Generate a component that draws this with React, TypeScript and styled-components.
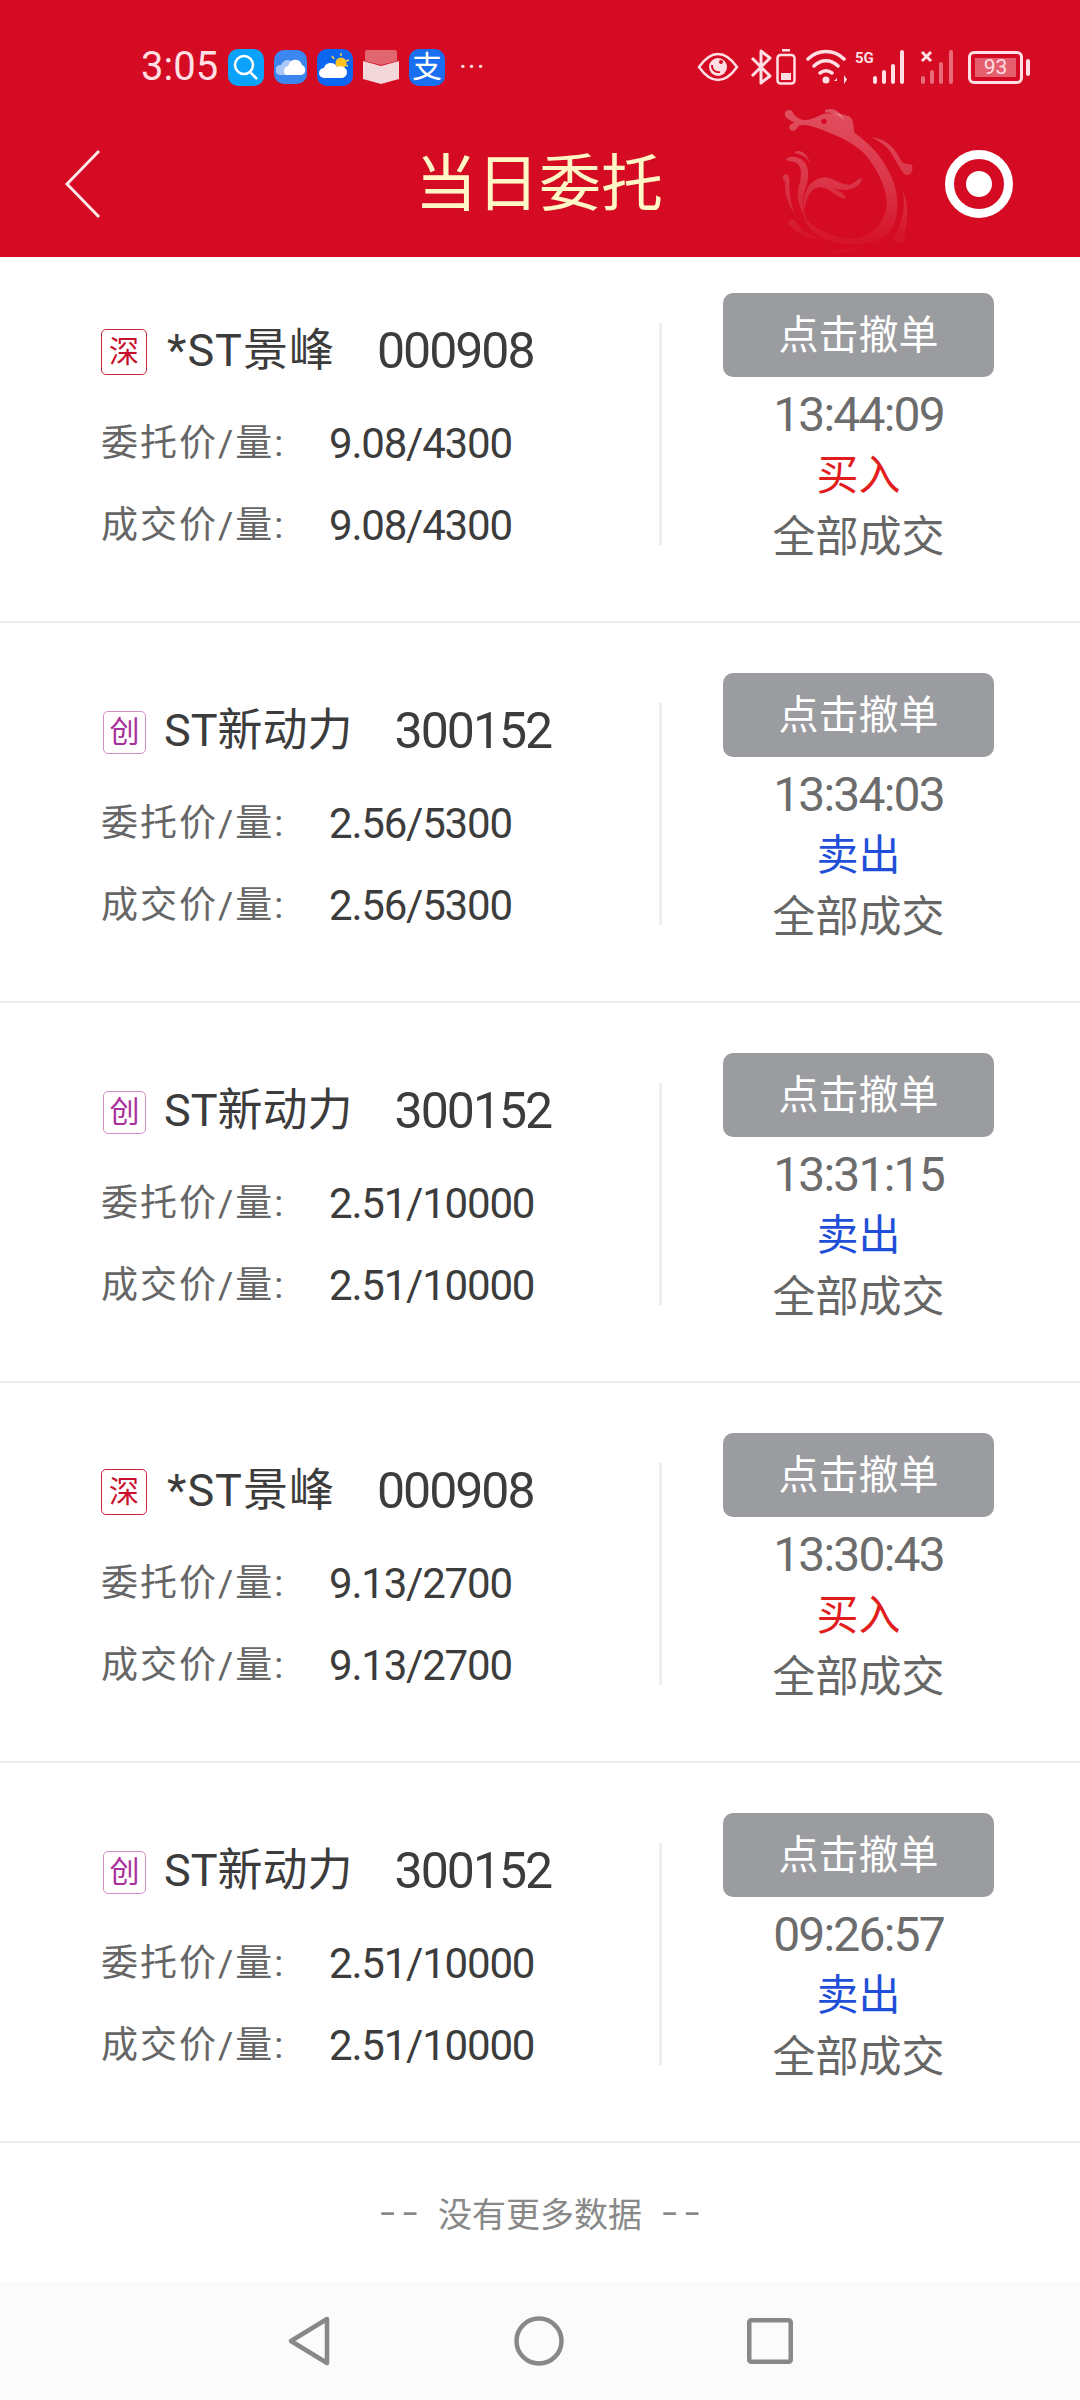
import React from "react";
import styled, {createGlobalStyle} from "styled-components";

const FONT = `Roboto, "Noto Sans CJK SC", sans-serif`;
const STATUS = "#ffdfe3";

interface Order {
  market: "深" | "创";
  name: string;
  code: string;
  price: string;
  filled: string;
  time: string;
  side: "买入" | "卖出";
}

const orders: Order[] = [
  {market: "深", name: "*ST景峰", code: "000908", price: "9.08/4300", filled: "9.08/4300", time: "13:44:09", side: "买入"},
  {market: "创", name: "ST新动力", code: "300152", price: "2.56/5300", filled: "2.56/5300", time: "13:34:03", side: "卖出"},
  {market: "创", name: "ST新动力", code: "300152", price: "2.51/10000", filled: "2.51/10000", time: "13:31:15", side: "卖出"},
  {market: "深", name: "*ST景峰", code: "000908", price: "9.13/2700", filled: "9.13/2700", time: "13:30:43", side: "买入"},
  {market: "创", name: "ST新动力", code: "300152", price: "2.51/10000", filled: "2.51/10000", time: "09:26:57", side: "卖出"},
];

const DragonMark = () => (
  <DragonSvg viewBox="0 0 480 480" width={160} height={160}>
    <defs>
      <linearGradient id="dragonFade" gradientUnits="userSpaceOnUse" x1="0" y1="30" x2="0" y2="465">
        <stop offset="0" stopColor="#fff" stopOpacity="0.28" />
        <stop offset="0.5" stopColor="#fff" stopOpacity="0.17" />
        <stop offset="0.85" stopColor="#fff" stopOpacity="0.05" />
        <stop offset="1" stopColor="#fff" stopOpacity="0.02" />
      </linearGradient>
    </defs>
    <g fill="url(#dragonFade)">
      {/* head, neck and the body ring */}
      <path d="M44 42C46 30 60 26 68 36 72 46 82 56 100 60 122 62 140 50 160 42 190 36 222 42 240 50 252 62 250 84 254 100 296 128 346 176 372 250 390 310 386 370 350 405 310 436 240 440 180 424 140 410 112 386 100 350 120 374 170 408 240 418 296 414 338 380 350 320 352 268 326 210 282 160 250 126 190 100 130 80 110 74 96 74 84 78 78 96 62 98 58 84 56 74 66 70 74 68 66 62 46 58 44 42Z" />
      <path d="M165 30C190 20 212 34 224 62 208 44 190 36 165 38Z" />
      <path d="M305 112C350 118 376 146 392 180 400 196 414 188 426 196 432 212 420 230 406 224 388 212 376 170 352 144 340 132 322 120 305 112Z" />
      <path d="M48 178C54 166 84 168 100 182 118 200 120 236 104 270 96 300 100 340 114 366 94 340 78 300 84 268 92 240 100 210 84 192 72 182 58 188 48 178Z" />
      <path d="M75 155C92 146 116 164 122 196 118 180 100 162 75 160Z" />
      <path d="M104 330C94 280 118 236 166 232 196 236 214 256 240 254 256 250 264 234 275 236 276 252 252 270 222 270 210 270 198 268 186 264 204 272 222 280 228 292 222 300 208 292 194 282 170 262 146 254 128 270 112 286 108 306 104 330Z" />
      <path d="M38 232C42 216 58 222 58 240 58 270 60 310 76 346 56 320 42 280 46 250 46 240 38 240 38 232Z" />
      <path d="M398 270C414 310 416 350 406 392 402 412 406 426 390 430 374 430 368 414 380 396 396 370 408 320 398 270Z" />
      <path d="M54 368C62 352 76 358 88 378 104 398 128 408 150 418 116 416 84 402 68 384 62 378 54 378 54 368Z" />
      <path d="M175 452C210 450 250 446 282 434 260 452 214 464 180 462Z" />
    </g>
    <circle cx="162" cy="64" r="8" fill="#d40b22" />
  </DragonSvg>
);

const StatusIcons = () => (
  <RightIcons>
    <svg width="42" height="30" viewBox="0 0 42 30">
      <path d="M2 15C9 5 15 2 21 2s12 3 19 13c-7 10-13 13-19 13S9 25 2 15z" fill="none" stroke={STATUS} strokeWidth="2.500" />
      <circle cx="21" cy="15" r="9" fill={STATUS} />
      <path d="M15 13a6.500 6.500 0 0 0 8 7" fill="none" stroke="#d40b22" strokeWidth="1.800" />
      <circle cx="24" cy="10" r="2" fill="#d40b22" />
    </svg>
    <BluetoothSvg width="22" height="36" viewBox="0 0 22 36">
      <path d="M2 9l18 18-9 7V2l9 7L2 27" fill="none" stroke={STATUS} strokeWidth="3" strokeLinejoin="round" />
    </BluetoothSvg>
    <PhoneBatterySvg width="20" height="36" viewBox="0 0 20 36">
      <rect x="6" y="0" width="8" height="2.500" fill={STATUS} />
      <rect x="1.500" y="6" width="17" height="28.500" rx="3" fill="none" stroke={STATUS} strokeWidth="2.500" />
      <rect x="5" y="24" width="10" height="7" fill={STATUS} />
    </PhoneBatterySvg>
    <WifiSvg width="42" height="36" viewBox="0 0 42 36">
      <path d="M2 10C12 0 28 0 38 10M8 17c7-7 17-7 24 0M14 24c4-3 8-3 12 0" fill="none" stroke={STATUS} strokeWidth="3.500" strokeLinecap="round" />
      <circle cx="20" cy="31" r="3.500" fill={STATUS} />
      <path d="M31 29l-3 3h3zM35 26v9M38 26v9l3-4.500z" fill={STATUS} />
    </WifiSvg>
    <SignalGroup>
      <FiveG>5G</FiveG>
      <svg width="36" height="34" viewBox="0 0 36 34">
        <path d="M3 28v4M12 22v10M21 16v16M30 2v30" stroke={STATUS} strokeWidth="4" strokeLinecap="round" />
      </svg>
    </SignalGroup>
    <SecondSignalSvg width="36" height="34" viewBox="0 0 36 34">
      <path d="M2 2l9 9M11 2l-9 9" stroke={STATUS} strokeWidth="3" />
      <path d="M3 28v4M12 22v10M21 14v18M31 2v30" stroke={STATUS} strokeOpacity="0.45" strokeWidth="4" strokeLinecap="round" />
    </SecondSignalSvg>
    <BatteryBox>
      <BatteryLevel>93</BatteryLevel>
    </BatteryBox>
    <BatteryTip />
  </RightIcons>
);

const OrderRow: React.FC<{order: Order; first: boolean}> = ({order, first}) => (
  <Row first={first}>
    <Info>
      <NameLine>
        <MarketBadge market={order.market}>{order.market}</MarketBadge>
        <StockName market={order.market}>{order.name}</StockName>
        <StockCode>{order.code}</StockCode>
      </NameLine>
      <PriceLine>
        <PriceLabel>委托价/量:</PriceLabel>
        <PriceValue>{order.price}</PriceValue>
      </PriceLine>
      <PriceLine>
        <PriceLabel>成交价/量:</PriceLabel>
        <PriceValue>{order.filled}</PriceValue>
      </PriceLine>
    </Info>
    <Actions>
      <CancelButton>点击撤单</CancelButton>
      <TimeText>{order.time}</TimeText>
      <SideText side={order.side}>{order.side}</SideText>
      <StateText>全部成交</StateText>
    </Actions>
  </Row>
);

export default function App() {
  return (
    <Page>
      <GlobalStyle />
      <Header>
        <StatusBar>
          <LeftIcons>
            <Clock>3:05</Clock>
            <AppIcon tone="#0aa2fb" round={10}>
              <svg width="30" height="30" viewBox="0 0 30 30">
                <circle cx="13" cy="13" r="9" fill="none" stroke="#fff" strokeWidth="2.500" />
                <path d="M19 20l7 7" stroke="#fff" strokeWidth="2.500" />
              </svg>
            </AppIcon>
            <AppIcon tone="#3b86ef" round={10} small>
              <svg width="30" height="24" viewBox="0 0 30 24">
                <path d="M4 20a5 5 0 0 1 1-10c2-5 7-6 10-4-4 3-5 9-3 14z" fill="#a9c9f8" />
                <path d="M10 20a5 5 0 0 1 2-9c2-8 12-8 14-1 5 2 4 10-1 10z" fill="#fff" />
              </svg>
            </AppIcon>
            <AppIcon tone="#0b66f2" round={10}>
              <svg width="32" height="32" viewBox="0 0 32 32">
                <path d="M22 2v3M13 5l2 3M30 9l-3 1M29 15l-3-1" stroke="#ffd24a" strokeWidth="1.500" />
                <circle cx="22" cy="12" r="5.500" fill="#ffc21f" />
                <path d="M5 27a5 5 0 0 1 0-10c1-6 11-7 13-1 3-2 10 0 10 5 0 4-3 6-6 6z" fill="#fff" />
              </svg>
            </AppIcon>
            <svg width="36" height="34" viewBox="0 0 36 34">
              <path d="M2 2q0-2 2-2h28q2 0 2 2v9L18 15 2 11z" fill="#e2666f" />
              <path d="M0 11l18 5 18-5v18l-18 5-18-5z" fill="#f3d7d9" />
            </svg>
            <AppIcon tone="#1a6ff0" round={10}>
              <AlipayGlyph>支</AlipayGlyph>
            </AppIcon>
            <MoreDots>···</MoreDots>
          </LeftIcons>
          <StatusIcons />
        </StatusBar>
        <NavBar>
          <NavSide>
            <svg width="36" height="70" viewBox="0 0 36 70">
              <path d="M34 2L2 35l32 33" fill="none" stroke="#ffe9ea" strokeWidth="3" />
            </svg>
          </NavSide>
          <Title>当日委托</Title>
          <NavSide right>
            <svg width="68" height="68" viewBox="0 0 68 68">
              <circle cx="34" cy="34" r="29.500" fill="none" stroke="#fff" strokeWidth="9" />
              <circle cx="34" cy="34" r="13" fill="#fff" />
            </svg>
          </NavSide>
          <DragonMark />
        </NavBar>
      </Header>

      <List>
        {orders.map((order, i) => (
          <OrderRow key={i} order={order} first={i === 0} />
        ))}
      </List>

      <EndNote>
        <EndDash>--</EndDash>
        <span>没有更多数据</span>
        <EndDash>--</EndDash>
      </EndNote>

      <SystemNav>
        <svg width="44" height="52" viewBox="0 0 44 52">
          <path d="M40 4L4 26l36 22z" fill="none" stroke="#888" strokeWidth="4.500" strokeLinejoin="round" />
        </svg>
        <svg width="50" height="50" viewBox="0 0 50 50">
          <circle cx="25" cy="25" r="22.500" fill="none" stroke="#888" strokeWidth="4.500" />
        </svg>
        <svg width="46" height="46" viewBox="0 0 46 46">
          <rect x="2.250" y="2.250" width="41.500" height="41.500" rx="2" fill="none" stroke="#888" strokeWidth="4.500" />
        </svg>
      </SystemNav>
    </Page>
  );
}

const GlobalStyle = createGlobalStyle`
  html, body {
    margin: 0;
    padding: 0;
    background: #fff;
  }

  * {
    box-sizing: border-box;
  }
`;

const Page = styled.div`
  display: flex;
  flex-direction: column;
  width: 1080px;
  height: 2400px;
  overflow: hidden;
  background: #fff;
  font-family: ${FONT};
`;

const Header = styled.header`
  display: flex;
  flex-direction: column;
  height: 257px;
  background: #d40b22;
`;

const StatusBar = styled.div`
  display: flex;
  justify-content: space-between;
  align-items: center;
  height: 90px;
  padding: 44px 50px 0 141px;
`;

const LeftIcons = styled.div`
  display: flex;
  align-items: center;
  gap: 10px;
`;

const Clock = styled.span`
  width: 77px;
  color: ${STATUS};
  font-size: 40px;
  line-height: 46px;
`;

const AppIcon = styled.span<{tone: string; round: number; small?: boolean}>`
  display: flex;
  align-items: center;
  justify-content: center;
  width: ${({small}) => small ? "33px" : "36px"};
  height: ${({small}) => small ? "34px" : "37px"};
  border-radius: ${({round}) => round}px;
  background: ${({tone}) => tone};
`;

const AlipayGlyph = styled.span`
  color: #fff;
  font-size: 30px;
  line-height: 34px;
`;

const MoreDots = styled.span`
  margin-left: 4px;
  color: ${STATUS};
  font-size: 30px;
  line-height: 30px;
  letter-spacing: 1px;
`;

const RightIcons = styled.div`
  display: flex;
  align-items: center;
`;

const BluetoothSvg = styled.svg`
  margin-left: 11px;
`;

const PhoneBatterySvg = styled.svg`
  margin-left: 4px;
`;

const WifiSvg = styled.svg`
  margin-left: 10px;
`;

const SignalGroup = styled.div`
  display: flex;
  align-items: flex-start;
  margin-left: 7px;
`;

const SecondSignalSvg = styled.svg`
  margin-left: 12px;
`;

const FiveG = styled.span`
  width: 17px;
  color: ${STATUS};
  font-size: 15px;
  font-weight: 700;
  line-height: 16px;
`;

const BatteryBox = styled.div`
  display: flex;
  width: 55px;
  height: 33px;
  margin-left: 12px;
  padding: 4px;
  border: 3px solid ${STATUS};
  border-radius: 6px;
`;

const BatteryLevel = styled.span`
  flex: 1;
  background: rgba(255, 223, 227, 0.4);
  color: ${STATUS};
  font-size: 21px;
  line-height: 19px;
  text-align: center;
`;

const BatteryTip = styled.span`
  width: 4px;
  height: 17px;
  margin-left: 3px;
  border-radius: 2px;
  background: ${STATUS};
`;

const NavBar = styled.div`
  position: relative;
  flex: 1;
  display: grid;
  grid-template-columns: 1fr auto 1fr;
  align-items: center;
  padding: 23px 67px 0 65px;
  overflow: hidden;
`;

const NavSide = styled.div<{right?: boolean}>`
  display: flex;
  justify-content: ${({right}) => right ? "flex-end" : "flex-start"};
  padding-bottom: 3px;
  line-height: 0;
`;

const Title = styled.h1`
  margin: 0;
  color: #fff8c6;
  font-size: 62px;
  font-weight: 400;
  line-height: 70px;
`;

const DragonSvg = styled.svg`
  position: absolute;
  top: 10px;
  left: 770px;
`;

const List = styled.div`
  display: flex;
  flex-direction: column;
`;

const Row = styled.div<{first: boolean}>`
  display: flex;
  height: ${({first}) => first ? "366px" : "380px"};
  padding: ${({first}) => first ? "36px" : "50px"} 0 0 101px;
  border-bottom: 2px solid #eeeeee;
`;

const Info = styled.div`
  display: flex;
  flex-direction: column;
  width: 561px;
  height: 222px;
  margin-top: 30px;
  border-right: 3px solid #eeeeee;
`;

const NameLine = styled.div`
  display: flex;
  align-items: center;
  height: 54px;
  margin-top: 1px;
  margin-bottom: 44px;
`;

const MarketBadge = styled.span<{market: string}>`
  display: flex;
  align-items: center;
  justify-content: center;
  width: ${({market}) => market === "深" ? "46px" : "43px"};
  height: ${({market}) => market === "深" ? "46px" : "43px"};
  margin: 2px 0 0 ${({market}) => market === "深" ? "0" : "2px"};
  border: 1px solid ${({market}) => market === "深" ? "#c8283c" : "#cf8fc8"};
  border-radius: 5px;
  color: ${({market}) => market === "深" ? "#c8102e" : "#a8309c"};
  font-size: 30px;
  line-height: 1;
`;

const StockName = styled.span<{market: string}>`
  margin-left: ${({market}) => market === "深" ? "20px" : "18px"};
  color: #3c3c3c;
  font-size: 45px;
  line-height: 54px;
  letter-spacing: ${({market}) => market === "深" ? "1px" : "0"};
`;

const StockCode = styled.span`
  margin-left: 42px;
  color: #3c3c3c;
  font-size: 50px;
  line-height: 54px;
  letter-spacing: -2px;
`;

const PriceLine = styled.div`
  display: flex;
  align-items: center;
  height: 44px;
  margin-bottom: 38px;
`;

const PriceLabel = styled.span`
  width: 228px;
  color: #666;
  font-size: 37px;
  line-height: 44px;
  letter-spacing: 2px;
`;

const PriceValue = styled.span`
  color: #3c3c3c;
  font-size: 42px;
  line-height: 44px;
  letter-spacing: -1.200px;
`;

const Actions = styled.div`
  display: flex;
  flex-direction: column;
  align-items: center;
  width: 271px;
  margin-left: 61px;
`;

const CancelButton = styled.button`
  width: 100%;
  height: 84px;
  margin-bottom: 8px;
  padding: 0 0 6px;
  border: 0;
  border-radius: 10px;
  background: #9b9ca0;
  color: #fff;
  font-family: inherit;
  font-size: 40px;
`;

const TimeText = styled.span`
  color: #6c6c6c;
  font-size: 48px;
  line-height: 60px;
  letter-spacing: -1.800px;
`;

const SideText = styled.span<{side: string}>`
  color: ${({side}) => side === "买入" ? "#e21d1d" : "#1f4fd8"};
  font-size: 42px;
  line-height: 62px;
`;

const StateText = styled.span`
  color: #666;
  font-size: 43px;
  line-height: 60px;
`;

const EndNote = styled.div`
  display: flex;
  justify-content: center;
  align-items: center;
  gap: 20px;
  height: 139px;
  color: #888;
  font-size: 34px;
`;

const EndDash = styled.span`
  margin-right: -7px;
  font-size: 54px;
  font-weight: 300;
  line-height: 44px;
  letter-spacing: 7px;
`;

const SystemNav = styled.nav`
  flex: 1;
  display: flex;
  justify-content: center;
  align-items: center;
  gap: 183px;
  background: #fbfbfb;
`;
